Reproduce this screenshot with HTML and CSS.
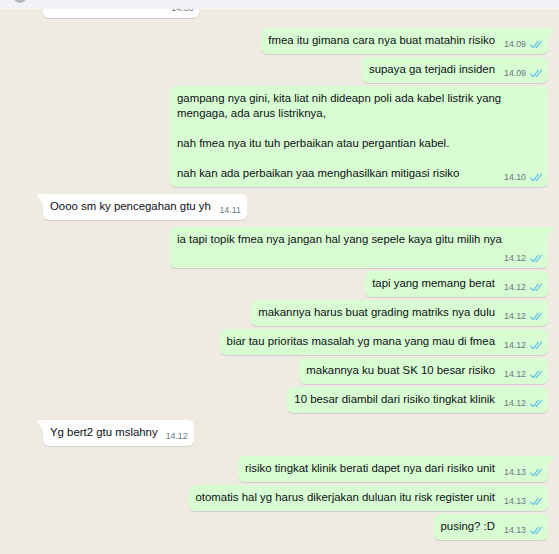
FILE: index.html
```html
<!DOCTYPE html>
<html>
<head>
    <meta charset="UTF-8">
    <link rel="stylesheet" href="styles.css">
</head>
<body>
    <div class="header">
        <div class="header-icon"></div>
    </div>
    <div class="chat">
        <div class="row row-in row-top">
            <div class="msg msg-in">
                <span class="text">oke nanti aku cek dulu</span><span class="spacer"></span>
                <span class="meta"><span class="time">14.08</span></span>
            </div>
        </div>

        <div class="row row-out row-group">
            <div class="msg msg-out tail">
                <svg class="tail-out" viewBox="0 0 8 13"><path d="M5.188 1H0v11.193l6.467-8.625C7.526 2.156 6.958 1 5.188 1z"/></svg>
                <span class="text">fmea itu gimana cara nya buat matahin risiko</span><span class="spacer"></span>
                <span class="meta"><span class="time">14.09</span><svg class="ticks" viewBox="0 0 16 11"><path d="M1 6.2l3.2 3.3L11 1.3M7.6 8.6l0.9 0.9L15.2 1.3"/></svg></span>
            </div>
        </div>
        <div class="row row-out">
            <div class="msg msg-out">
                <span class="text">supaya ga terjadi insiden</span><span class="spacer"></span>
                <span class="meta"><span class="time">14.09</span><svg class="ticks" viewBox="0 0 16 11"><path d="M1 6.2l3.2 3.3L11 1.3M7.6 8.6l0.9 0.9L15.2 1.3"/></svg></span>
            </div>
        </div>
        <div class="row row-out">
            <div class="msg msg-out">
                <span class="text">gampang nya gini, kita liat nih dideapn poli ada kabel listrik yang mengaga, ada arus listriknya,<br><br>nah fmea nya itu tuh perbaikan atau pergantian kabel.<br><br>nah kan ada perbaikan yaa menghasilkan mitigasi risiko</span><span class="spacer"></span>
                <span class="meta"><span class="time">14.10</span><svg class="ticks" viewBox="0 0 16 11"><path d="M1 6.2l3.2 3.3L11 1.3M7.6 8.6l0.9 0.9L15.2 1.3"/></svg></span>
            </div>
        </div>

        <div class="row row-in row-group">
            <div class="msg msg-in tail">
                <svg class="tail-in" viewBox="0 0 8 13"><path d="M1.533 3.568 8 12.193V1H2.812C1.042 1 .474 2.156 1.533 3.568z"/></svg>
                <span class="text">Oooo sm ky pencegahan gtu yh</span><span class="spacer"></span>
                <span class="meta"><span class="time">14.11</span></span>
            </div>
        </div>

        <div class="row row-out row-group">
            <div class="msg msg-out tail">
                <svg class="tail-out" viewBox="0 0 8 13"><path d="M5.188 1H0v11.193l6.467-8.625C7.526 2.156 6.958 1 5.188 1z"/></svg>
                <span class="text">ia tapi topik fmea nya jangan hal yang sepele kaya gitu milih nya</span><span class="spacer"></span>
                <span class="meta"><span class="time">14.12</span><svg class="ticks" viewBox="0 0 16 11"><path d="M1 6.2l3.2 3.3L11 1.3M7.6 8.6l0.9 0.9L15.2 1.3"/></svg></span>
            </div>
        </div>
        <div class="row row-out">
            <div class="msg msg-out">
                <span class="text">tapi yang memang berat</span><span class="spacer"></span>
                <span class="meta"><span class="time">14.12</span><svg class="ticks" viewBox="0 0 16 11"><path d="M1 6.2l3.2 3.3L11 1.3M7.6 8.6l0.9 0.9L15.2 1.3"/></svg></span>
            </div>
        </div>
        <div class="row row-out">
            <div class="msg msg-out">
                <span class="text">makannya harus buat grading matriks nya dulu</span><span class="spacer"></span>
                <span class="meta"><span class="time">14.12</span><svg class="ticks" viewBox="0 0 16 11"><path d="M1 6.2l3.2 3.3L11 1.3M7.6 8.6l0.9 0.9L15.2 1.3"/></svg></span>
            </div>
        </div>
        <div class="row row-out">
            <div class="msg msg-out">
                <span class="text">biar tau prioritas masalah yg mana yang mau di fmea</span><span class="spacer"></span>
                <span class="meta"><span class="time">14.12</span><svg class="ticks" viewBox="0 0 16 11"><path d="M1 6.2l3.2 3.3L11 1.3M7.6 8.6l0.9 0.9L15.2 1.3"/></svg></span>
            </div>
        </div>
        <div class="row row-out">
            <div class="msg msg-out">
                <span class="text">makannya ku buat SK 10 besar risiko</span><span class="spacer"></span>
                <span class="meta"><span class="time">14.12</span><svg class="ticks" viewBox="0 0 16 11"><path d="M1 6.2l3.2 3.3L11 1.3M7.6 8.6l0.9 0.9L15.2 1.3"/></svg></span>
            </div>
        </div>
        <div class="row row-out">
            <div class="msg msg-out">
                <span class="text">10 besar diambil dari risiko tingkat klinik</span><span class="spacer"></span>
                <span class="meta"><span class="time">14.12</span><svg class="ticks" viewBox="0 0 16 11"><path d="M1 6.2l3.2 3.3L11 1.3M7.6 8.6l0.9 0.9L15.2 1.3"/></svg></span>
            </div>
        </div>

        <div class="row row-in row-group">
            <div class="msg msg-in tail">
                <svg class="tail-in" viewBox="0 0 8 13"><path d="M1.533 3.568 8 12.193V1H2.812C1.042 1 .474 2.156 1.533 3.568z"/></svg>
                <span class="text">Yg bert2 gtu mslahny</span><span class="spacer"></span>
                <span class="meta"><span class="time">14.12</span></span>
            </div>
        </div>

        <div class="row row-out row-group row-wide">
            <div class="msg msg-out tail">
                <svg class="tail-out" viewBox="0 0 8 13"><path d="M5.188 1H0v11.193l6.467-8.625C7.526 2.156 6.958 1 5.188 1z"/></svg>
                <span class="text">risiko tingkat klinik berati dapet nya dari risiko unit</span><span class="spacer"></span>
                <span class="meta"><span class="time">14.13</span><svg class="ticks" viewBox="0 0 16 11"><path d="M1 6.2l3.2 3.3L11 1.3M7.6 8.6l0.9 0.9L15.2 1.3"/></svg></span>
            </div>
        </div>
        <div class="row row-out">
            <div class="msg msg-out">
                <span class="text">otomatis hal yg harus dikerjakan duluan itu risk register unit</span><span class="spacer"></span>
                <span class="meta"><span class="time">14.13</span><svg class="ticks" viewBox="0 0 16 11"><path d="M1 6.2l3.2 3.3L11 1.3M7.6 8.6l0.9 0.9L15.2 1.3"/></svg></span>
            </div>
        </div>
        <div class="row row-out">
            <div class="msg msg-out">
                <span class="text">pusing? :D</span><span class="spacer"></span>
                <span class="meta"><span class="time">14.13</span><svg class="ticks" viewBox="0 0 16 11"><path d="M1 6.2l3.2 3.3L11 1.3M7.6 8.6l0.9 0.9L15.2 1.3"/></svg></span>
            </div>
        </div>
    </div>
</body>
</html>
```

FILE: styles.css
```css
body {
    margin: 0;
    height: 554px;
    overflow: hidden;
    background-color: #efeae2;
    font-family: "Liberation Sans", Arial, sans-serif;
    color: #0b1014;
}
.header {
    position: relative;
    z-index: 2;
    height: 9px;
    background-color: #f0f2f5;
    overflow: hidden;
    padding-left: 14px;
}
.header-icon {
    width: 12px;
    height: 12px;
    margin-top: -9px;
    border-radius: 50%;
    background-color: #b4b8bb;
}
.chat {
    display: flex;
    flex-direction: column;
    gap: 3px;
    padding: 0 11px 0 43px;
}
.row {
    display: flex;
}
.row-in {
    justify-content: flex-start;
}
.row-out {
    justify-content: flex-end;
}
.row-group {
    margin-top: 4px;
}
.row-top {
    margin-top: -17px;
}
.row-top + .row-group {
    margin-top: 7px;
}
.row-wide {
    margin-top: 7px;
}
.msg {
    position: relative;
    box-sizing: border-box;
    max-width: 378px;
    padding: 5px 6px 6px 7px;
    border-radius: 6px;
    font-size: 11.4px;
    line-height: 15px;
    box-shadow: 0 1px 0.5px rgba(11, 20, 26, 0.13);
}
.msg-in {
    background-color: #fff;
}
.msg-out {
    background-color: #d9fdd3;
}
.msg-in.tail {
    border-top-left-radius: 0;
}
.msg-out.tail {
    border-top-right-radius: 0;
}
.tail-in,
.tail-out {
    position: absolute;
    top: -1px;
    width: 7px;
    height: 11px;
}
.tail-in {
    left: -7px;
    fill: #fff;
}
.tail-out {
    right: -7px;
    fill: #d9fdd3;
}
.spacer {
    display: inline-block;
    width: 47px;
    height: 1px;
}
.msg-in .spacer {
    width: 30px;
}
.meta {
    position: absolute;
    right: 6px;
    bottom: 4px;
    display: flex;
    align-items: center;
    gap: 4px;
    height: 12px;
}
.time {
    font-size: 8.8px;
    line-height: 12px;
    color: #667781;
}
.ticks {
    width: 12px;
    height: 9px;
    fill: none;
    stroke: #53bdeb;
    stroke-width: 1.5;
    stroke-linecap: round;
    stroke-linejoin: round;
}
```
